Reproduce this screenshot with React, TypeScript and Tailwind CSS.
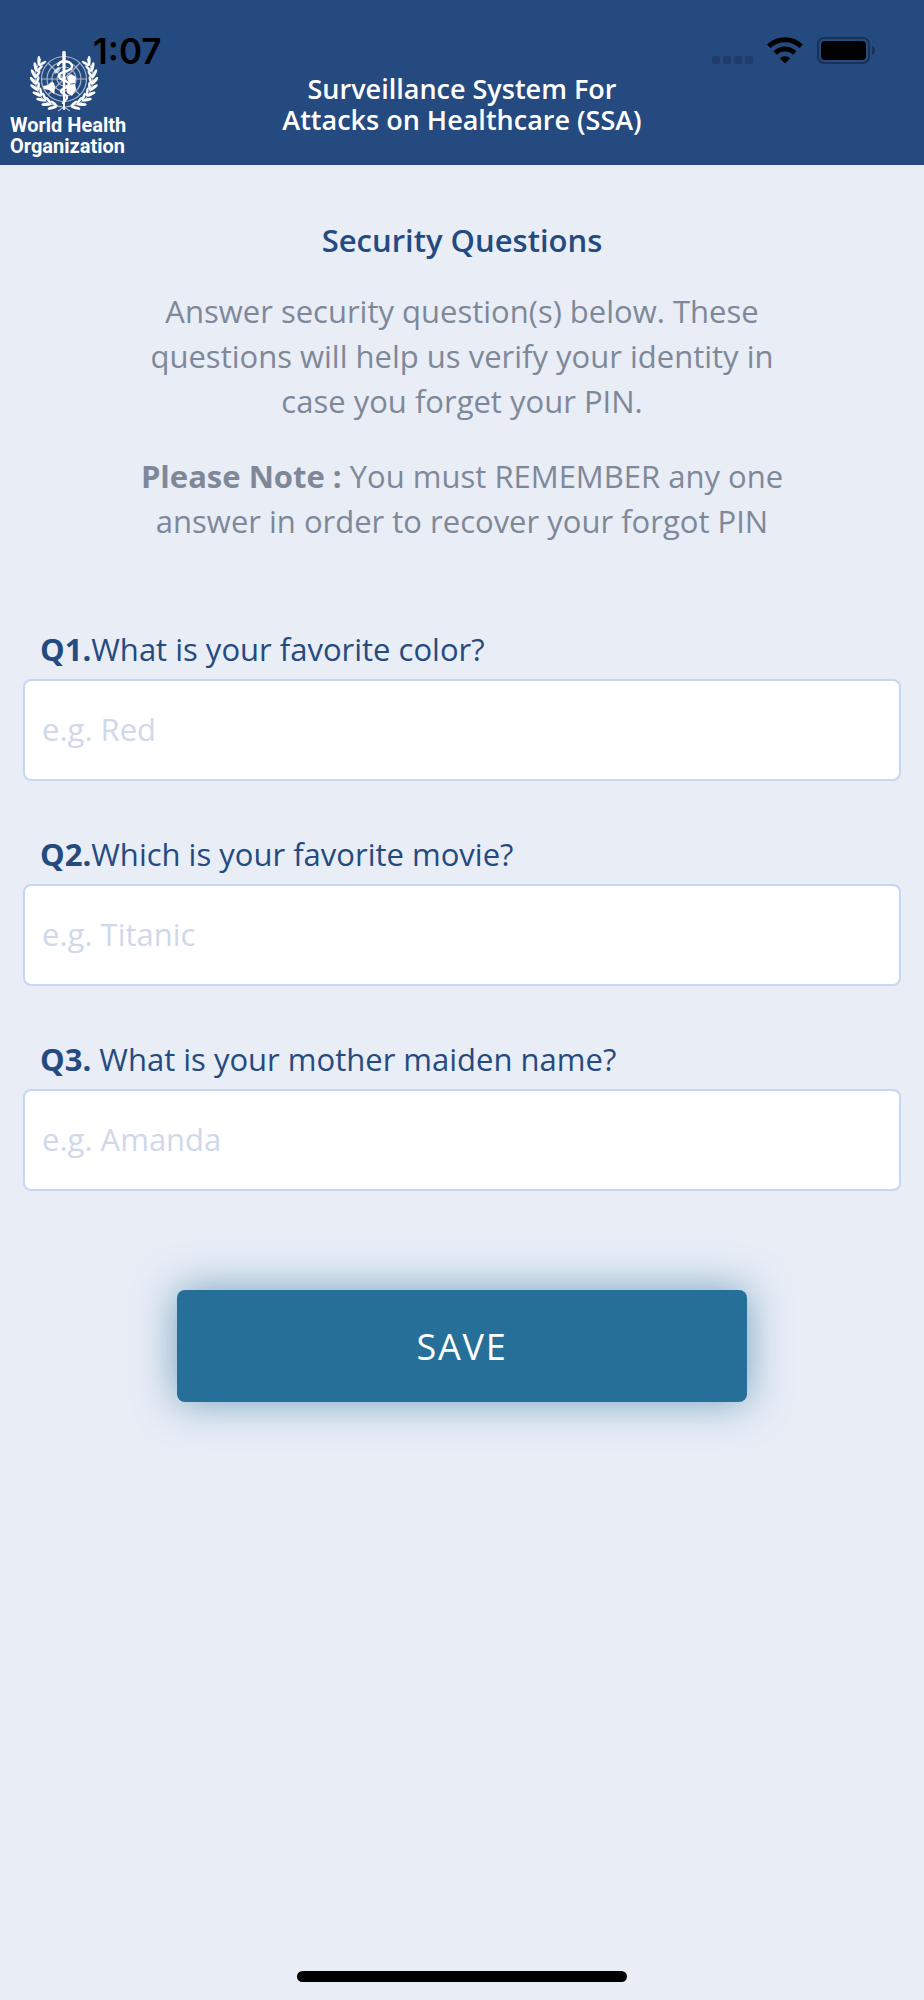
import React from "react";

const questions = [
  { id: "q1", number: "Q1.", text: "What is your favorite color?", placeholder: "e.g. Red" },
  { id: "q2", number: "Q2.", text: "Which is your favorite movie?", placeholder: "e.g. Titanic" },
  { id: "q3", number: "Q3.", text: " What is your mother maiden name?", placeholder: "e.g. Amanda" },
];

// Leaf pairs of the wreath, in degrees from the bottom of the emblem
const leaves = [22, 35, 48, 61, 74, 87, 100, 113, 126];

function Branch() {
  return (
    <g>
      <path d="M40 61 C32 54 22 58 14 50 C4 41 2 24 11 9" fill="none" stroke="currentColor" strokeWidth="0.8" />
      {leaves.map((angle) => (
        <g key={angle} transform={`rotate(${angle} 34 29)`}>
          <ellipse cx="34" cy="60" rx="4.800" ry="1.600" transform="rotate(-36 34 60)" />
          <ellipse cx="34" cy="55.500" rx="4.400" ry="1.300" transform="rotate(20 34 55.5)" />
        </g>
      ))}
    </g>
  );
}

function Emblem() {
  return (
    <svg viewBox="0 0 68 62" className="h-[62px] w-[68px]" fill="currentColor" aria-hidden="true">
      <Branch />
      <g transform="translate(68 0) scale(-1 1)">
        <Branch />
      </g>
      <g fill="none" stroke="currentColor" strokeWidth="1.2" opacity="0.6">
        <circle cx="34" cy="29" r="22.500" />
        <circle cx="34" cy="29" r="17" />
        <circle cx="34" cy="29" r="12" />
        <circle cx="34" cy="29" r="7" />
        <path d="M11.500 29h45M18 13l32 32M50 13l-32 32" />
      </g>
      <path d="M13 36l5-1 3-3 3 1 1 5-1 6-5-4-5-1z" />
      <path d="M37 27l4-3 5 3-1 6-6 1zM36 35l9-1 1 5-4 7-5-3z" />
      <path d="M24 21l4-4 3 1-2 4-4 2z" opacity="0.7" />
      <path d="M32.200 2.500a1.800 1.800 0 0 1 3.600 0L34.800 60h-1.600z" />
      <path
        d="M28 15c3-6 15-4 14 2-1 5-13 4-13 9 0 5 10 4 10 8s-8 4-8 7 6 3 6 6-3 4-4 6"
        fill="none"
        stroke="currentColor"
        strokeWidth="2.4"
        strokeLinecap="round"
      />
    </svg>
  );
}

function StatusBar() {
  return (
    <div className="absolute inset-x-0 top-0 flex h-[72px] items-end justify-between pr-12 pl-[93px] text-black">
      <span className="font-['Inter'] text-[35px] leading-[42px] font-semibold">1:07</span>
      <div className="mb-2 flex items-end gap-[14px]">
        <svg viewBox="0 0 41 8" className="h-2 w-[41px]" fill="#1e3d6d">
          <rect x="0" width="8" height="8" rx="2" />
          <rect x="11" width="8" height="8" rx="2" />
          <rect x="22" width="8" height="8" rx="2" />
          <rect x="33" width="8" height="8" rx="2" />
        </svg>
        <svg viewBox="0 0 36 27" className="h-[27px] w-9">
          <g fill="none" stroke="currentColor" strokeWidth="5">
            <path d="M1.800 9.200a23.500 23.500 0 0 1 32.400 0" />
            <path d="M8.200 16a14 14 0 0 1 19.600 0" />
          </g>
          <path d="M18 26.500l-5.200-5.300a7.800 7.800 0 0 1 10.400 0z" />
        </svg>
        <svg viewBox="0 0 59 27" className="h-[27px] w-[59px]">
          <rect x="1" y="1" width="51" height="25" rx="6" fill="none" stroke="#1a3156" strokeWidth="2" />
          <rect x="4" y="4" width="45" height="19" rx="4" />
          <path d="M55 9c4 1 4 8 0 9z" fill="#1a3156" />
        </svg>
      </div>
    </div>
  );
}

export default function App() {
  return (
    <div className="flex min-h-screen flex-col bg-[#e8edf6] font-['Open_Sans',sans-serif] text-[31px] leading-[45px]">
      <header className="relative grid grid-cols-[1fr_auto_1fr] items-start bg-[#254a80] pb-2 text-white">
        <StatusBar />
        <div className="mt-[50px] flex w-[126px] flex-col pl-[10px]">
          <div className="pl-5">
            <Emblem />
          </div>
          <p className="mt-[3px] font-['Roboto',sans-serif] text-[20px] leading-[21px] font-bold whitespace-nowrap">
            World Health
            <br />
            Organization
          </p>
        </div>
        <h1 className="mt-[73px] text-center text-[27px] leading-[31px] font-semibold">
          Surveillance System For
          <br />
          Attacks on Healthcare (SSA)
        </h1>
      </header>

      <main className="px-[23px] pt-[53px]">
        <div className="mx-auto max-w-[660px] text-center text-[#7f8898]">
          <h2 className="font-semibold text-[#254a80]">Security Questions</h2>
          <p className="mt-[26px]">
            Answer security question(s) below. These questions will help us verify your identity in case you forget
            your PIN.
          </p>
          <p className="mt-[30px]">
            <strong className="font-bold">Please Note :</strong> You must REMEMBER any one answer in order to recover
            your forgot PIN
          </p>
        </div>

        <form className="mt-[83px]" onSubmit={(e) => e.preventDefault()}>
          <div className="space-y-[51px]">
            {questions.map((q) => (
              <div key={q.id}>
                <label htmlFor={q.id} className="block px-[17px] whitespace-pre-wrap text-[#254a80]">
                  <b className="font-bold">{q.number}</b>
                  {q.text}
                </label>
                <input
                  id={q.id}
                  type="text"
                  placeholder={q.placeholder}
                  className="mt-[7px] block h-[102px] w-full rounded-lg border-2 border-[#c6d6f3] bg-white px-[17px] pb-[2px] outline-none placeholder:text-[#d0d8ea]"
                />
              </div>
            ))}
          </div>
          <button
            type="submit"
            className="mx-auto mt-[99px] block h-28 w-[65%] rounded-lg bg-[#266f99] text-[36px] tracking-wider text-white shadow-[0_0_40px_rgba(38,111,153,0.6)]"
          >
            SAVE
          </button>
        </form>
      </main>

      <div className="mx-auto mt-auto mb-[18px] h-[11px] w-[330px] rounded-full bg-black" />
    </div>
  );
}
